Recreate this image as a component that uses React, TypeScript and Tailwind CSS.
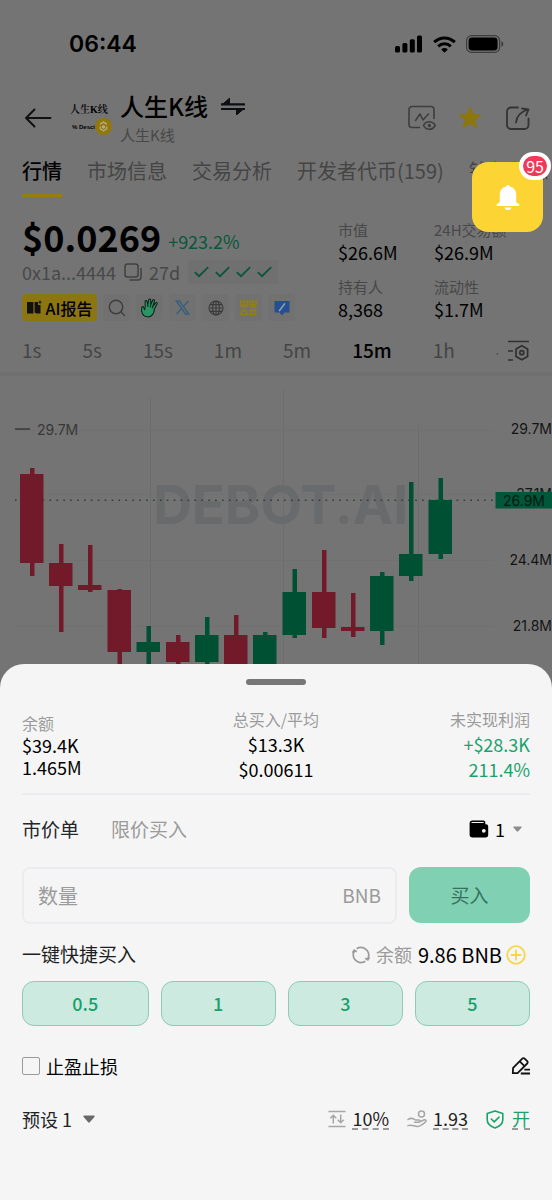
const tabs = ['行情', '市场信息', '交易分析', '开发者代币(159)', '钱包信息']

const frames = ['1s', '5s', '15s', '1m', '5m', '15m', '1h']

const marketStats = [
  { label: '市值', value: '$26.6M' },
  { label: '24H交易额', value: '$26.9M' },
  { label: '持有人', value: '8,368' },
  { label: '流动性', value: '$1.7M' },
]

const quickAmounts = ['0.5', '1', '3', '5']

// wick and body are [top, bottom]
const candles = [
  { x: 32, wick: [468, 576], body: [474, 563], up: false },
  { x: 61, wick: [544, 632], body: [563, 586], up: false },
  { x: 90, wick: [545, 592], body: [585, 590], up: false },
  { x: 119.5, wick: [589, 690], body: [590, 652], up: false },
  { x: 148.5, wick: [626, 690], body: [642, 652], up: true },
  { x: 178, wick: [635, 690], body: [642, 662], up: false },
  { x: 207, wick: [617, 690], body: [635, 662], up: true },
  { x: 236, wick: [615, 690], body: [635, 690], up: false },
  { x: 265, wick: [632, 690], body: [635, 690], up: true },
  { x: 294.5, wick: [569, 638], body: [592, 635], up: true },
  { x: 324, wick: [550, 638], body: [592, 628], up: false },
  { x: 353, wick: [593, 637], body: [627, 631], up: false },
  { x: 382, wick: [572, 645], body: [576, 631], up: true },
  { x: 411, wick: [482, 581], body: [554, 576], up: true },
  { x: 440.5, wick: [478, 559], body: [500, 554], up: true },
]

function StatusBar() {
  return (
    <div className="flex h-[88px] items-center justify-between pl-[69px] pr-12">
      <span className="font-['Inter',sans-serif] text-[23px] font-semibold leading-none">06:44</span>
      <div className="flex items-center gap-2.5">
        <svg width="28" height="18" viewBox="0 0 28 18">
          <rect x="0" y="11" width="5" height="6.5" rx="1.5" />
          <rect x="7.4" y="8" width="5" height="9.5" rx="1.5" />
          <rect x="14.8" y="4.2" width="5" height="13.3" rx="1.5" />
          <rect x="22" y="0.5" width="5" height="17" rx="1.5" />
        </svg>
        <svg width="23" height="17" viewBox="0 0 23 17" fill="none" stroke="#000" strokeWidth="3.1">
          <path d="M1.2 6.2a14.6 14.6 0 0 1 20.6 0" />
          <path d="M5.2 10.3a9 9 0 0 1 12.6 0" />
          <path d="M11.5 16.8l-3.3-3.4a4.7 4.7 0 0 1 6.6 0z" fill="#000" stroke="none" />
        </svg>
        <svg width="38" height="18" viewBox="0 0 38 18">
          <rect x="0.6" y="0.6" width="33" height="16.8" rx="5" fill="none" stroke="#3c3c3c" strokeWidth="1.2" />
          <rect x="2.6" y="2.6" width="29" height="12.8" rx="3.4" />
          <path d="M35.3 6.2v5.6c1.2-.4 2-1.5 2-2.8s-.8-2.4-2-2.8z" fill="#3c3c3c" />
        </svg>
      </div>
    </div>
  )
}

function Header() {
  return (
    <header className="flex h-[60px] items-center px-[22px]">
      <button aria-label="返回" className="mr-[18px]">
        <svg width="30" height="22" viewBox="0 0 30 22" fill="none" stroke="#111" strokeWidth="2" strokeLinecap="round" strokeLinejoin="round">
          <path d="M12.5 2.5L4 11l8.5 8.5M4 11h24.5" />
        </svg>
      </button>
      <div className="flex h-10 w-[42px] flex-col font-['Liberation_Serif','Noto_Serif_CJK_SC','Noto_Sans_CJK_SC',serif] leading-none">
        <span className="whitespace-nowrap pt-1 text-[10px] font-semibold leading-4">人生K线</span>
        <div className="flex items-center justify-between pl-0.5">
          <span className="whitespace-nowrap font-['Liberation_Sans',sans-serif] text-[6px] font-bold">% Desci</span>
          <svg className="shrink-0" width="17" height="17" viewBox="0 0 16 16">
            <circle cx="8" cy="8" r="8" fill="#927709" />
            <path d="M8 3l3.2 1.9v1.7L8 4.8 4.8 6.6V4.9zM8 6.6l1.5.9v1.8L8 10.2l-1.5-.9V7.5zM4.400 7.600v3L8 12.800l3.600-2.200v-3l-1.200.7v1.600L8 11.400 5.600 9.900V8.300z" fill="#b3ab8c" />
          </svg>
        </div>
      </div>
      <div className="ml-2">
        <div className="flex items-center gap-3">
          <h1 className="text-[24px] font-medium leading-[34px]">人生K线</h1>
          <svg width="26" height="18" viewBox="0 0 26 18" fill="none" stroke="#0d0f12" strokeWidth="2.2">
            <path d="M1 7.3h24M1 12h24" />
            <path d="M2.5 7.3L9.5 1.2V7z" fill="#0d0f12" strokeWidth="1" />
            <path d="M23.5 12l-7 6V12z" fill="#0d0f12" strokeWidth="1" />
          </svg>
        </div>
        <p className="text-[15px] leading-6 text-[#484848]">人生K线</p>
      </div>
      <div className="ml-auto flex items-center gap-[22px]">
        <button aria-label="观察图表">
          <svg width="28" height="26" viewBox="0 0 28 26" fill="none" stroke="#3e3e3e" strokeWidth="1.6" strokeLinecap="round" strokeLinejoin="round">
            <path d="M11.5 22.5H4a3 3 0 0 1-3-3V4.5a3 3 0 0 1 3-3h19a3 3 0 0 1 3 3v9" />
            <path d="M7.5 15.5L12 9l3 6 5.5-6" />
            <path d="M15.5 20.5c2.6-5 9-5 11.7 0-2.7 5-9.1 5-11.7 0z" />
            <circle cx="21.4" cy="20.5" r="0.9" fill="#3e3e3e" />
          </svg>
        </button>
        <button aria-label="收藏">
          <svg width="24" height="24" viewBox="0 0 24 24" fill="#8c7610">
            <path d="M12 1.2l3 7 7.8.7-5.9 5.1 1.8 7.6-6.7-4.1-6.7 4.1L7.1 14 1.2 8.9l7.8-.7z" stroke="#8c7610" strokeLinejoin="round" />
          </svg>
        </button>
        <button aria-label="分享" className="ml-0.5">
          <svg width="24" height="24" viewBox="0 0 24 24" fill="none" stroke="#333" strokeWidth="1.8" strokeLinecap="round" strokeLinejoin="round">
            <path d="M12 1.5H5a4 4 0 0 0-4 4V19a4 4 0 0 0 4 4h13.5a4 4 0 0 0 4-4v-6.5" />
            <path d="M10 16.5C10.5 10.5 14 6 22 3.5M16 2.5l6.5 1-2.5 6" />
          </svg>
        </button>
      </div>
    </header>
  )
}

function SocialLinks() {
  return (
    <div className="mt-2.5 flex h-[27px] items-stretch gap-1.5">
      <button className="flex w-[75px] items-center justify-center gap-1 rounded bg-[#8c7612] text-[16px] font-medium whitespace-nowrap">
        <svg width="15" height="15" viewBox="0 0 15 15" fill="#111">
          <path d="M0 2h6.4v11.5H0zM7.600 2H11v3h2.500v8.500H9.500l-1.900-1z" />
          <path d="M13 0l.6 1.600 1.400.6-1.400.6L13 4.400l-.6-1.600L11 2.200l1.400-.6z" />
        </svg>
        AI报告
      </button>
      <a href="#search" aria-label="搜索" className="flex w-[27px] items-center justify-center rounded bg-[#717171]">
        <svg width="18" height="18" viewBox="0 0 18 18" fill="none" stroke="#3c3c3c" strokeWidth="1.4" strokeLinecap="round">
          <circle cx="8" cy="8" r="6.7" />
          <path d="M13 13l3.500 3.500" />
        </svg>
      </a>
      <a href="#hand" aria-label="社区" className="flex w-[27px] items-center justify-center rounded bg-[#717171]">
        <svg className="rotate-12" width="18" height="20" viewBox="0 0 18 20" fill="#2a9466" stroke="#0a1f14" strokeWidth="1" strokeLinejoin="round">
          <path d="M4 9.500L2.800 4.600c-.2-1.200 1.400-1.700 1.900-.5L6.200 7.500 6 2.300c0-1.400 1.800-1.500 2.100-.2l.9 4.700 1-5c.4-1.200 2-.9 1.900.4l-.4 5.300 1.900-3.700c.7-1 2.100-.4 1.700.8l-1.700 5.700c.9 3-.4 8.400-5.100 8.900-3.600.4-5.800-1.600-6.900-4.500L.8 11.200c-.1-1.100 1.100-1.500 1.700-.6l1.700 2.200z" />
          <path d="M6.200 7.500l.6 2M9 6.800l.1 2.400M11.500 7.500l-.5 2.300" fill="none" />
        </svg>
      </a>
      <a href="#x" aria-label="X" className="flex w-[27px] items-center justify-center rounded bg-[#717171]">
        <svg width="15" height="15" viewBox="0 0 15 15" fill="none" stroke="#35607d" strokeWidth="1.4">
          <path d="M1.200 1h3.200l9.400 13h-3.200z" />
          <path d="M13.300 1L8.400 6.600M6.500 8.700L1.600 14" />
        </svg>
      </a>
      <a href="#site" aria-label="官网" className="flex w-[27px] items-center justify-center rounded bg-[#717171]">
        <svg width="16" height="16" viewBox="0 0 16 16" fill="none" stroke="#3a3a3a" strokeWidth="1.1">
          <circle cx="8" cy="8" r="7" />
          <ellipse cx="8" cy="8" rx="3.5" ry="7" />
          <path d="M8 1v14M1 8h14M2 4.600h12M2 11.400h12" />
        </svg>
      </a>
      <a href="#binance" aria-label="币安广场" className="flex w-[27px] items-center justify-center rounded bg-[#717171]">
        <svg width="17" height="16" viewBox="0 0 17 16" fill="none" stroke="#94800f" strokeWidth="1.6">
          <path d="M.8 1.200h6.400v4H.8zM4 1.200v6.600M.5 7h7M9.500 1.200h6.700v3.500H9.500zM12.800 0v7.800M10 6.800h6" />
          <path d="M2 10l-1 4.500h6L6 10M4 9v3M9.500 10h7M9.500 14.800h7M11 9v6M14.800 9v6" />
        </svg>
      </a>
      <a href="#note" aria-label="笔记" className="flex w-[27px] items-center justify-center rounded bg-[#717171]">
        <svg width="16" height="16" viewBox="0 0 16 16">
          <path d="M.5 1h15v11.500h-5L8 15.500l-2.500-3h-5z" fill="#245092" />
          <path d="M5.500 10.500l5-6.500" stroke="#8d9aae" strokeWidth="1.7" strokeLinecap="round" />
        </svg>
      </a>
    </div>
  )
}

function TokenInfo() {
  return (
    <section className="flex items-end justify-between px-[22px] pt-[19px]">
      <div>
        <div className="flex h-10 items-center gap-[7px]">
          <span className="text-[36px] font-bold leading-10">$0.0269</span>
          <span className="pt-2.5 text-[18px] leading-6 text-[#09573c]">+923.2%</span>
        </div>
        <div className="mt-1 flex h-6 items-center text-[18px] text-[#484848]">
          <span>0x1a...4444</span>
          <button aria-label="复制" className="ml-2">
            <svg width="18" height="18" viewBox="0 0 18 18" fill="none" stroke="#404040" strokeWidth="1.5" strokeLinecap="round">
              <rect x="1" y="1" width="13" height="13" rx="2.5" />
              <path d="M17 5.500V14a3 3 0 0 1-3 3H6" />
            </svg>
          </button>
          <span className="ml-[7px]">27d</span>
          <div className="ml-2 flex items-center gap-1.5 rounded bg-[#707070] px-1.5 py-1.5">
            {[0, 1, 2, 3].map((i) => (
              <svg key={i} width="15" height="12" viewBox="0 0 15 12" fill="none" stroke="#07553a" strokeWidth="1.7">
                <path d="M.8 6.200l4.200 4L14.200 1.200" />
              </svg>
            ))}
          </div>
        </div>
        <SocialLinks />
      </div>
      <dl className="grid grid-cols-[96px_96px] gap-y-[13px]">
        {marketStats.map((s) => (
          <div key={s.label}>
            <dt className="text-[15px] leading-5 text-[#484848]">{s.label}</dt>
            <dd className="text-[18px] leading-6">{s.value}</dd>
          </div>
        ))}
      </dl>
    </section>
  )
}

function FrameBar() {
  return (
    <div className="flex items-center justify-between border-b-4 border-[#6f6f6f] px-[22px] pt-2">
      <div className="flex h-[43px] items-center gap-[41px]">
        {frames.map((f) => (
          <button key={f} className={f === '15m' ? 'text-[19px] font-medium' : 'text-[19px] text-[#454545]'}>
            {f}
          </button>
        ))}
      </div>
      <button aria-label="图表设置">
        <svg width="34" height="24" viewBox="0 0 34 24" fill="none" stroke="#303030" strokeWidth="1.7" strokeLinejoin="round">
          <path d="M12 2.500h21M12 12h5M12 21h5" />
          <path d="M20 10l5.800-3.300L31.600 10v7.500l-5.800 3.300L20 17.500z" />
          <circle cx="25.8" cy="13.7" r="2" />
          <circle cx="1.2" cy="15" r="0.7" fill="#303030" stroke="none" />
        </svg>
      </button>
    </div>
  )
}

function Chart() {
  return (
    <svg className="block w-full" viewBox="0 376 552 310" fontFamily="Inter, sans-serif">
      <g stroke="#6d6d6d" strokeWidth="1">
        <path d="M150.500 396v290M283.500 390v296M418.500 424v262" />
        <path d="M15 430.500h480M15 494.500h480M15 560.500h480M15 626.500h480" stroke="#717171" />
      </g>
      <text x="153" y="524" fontSize="54" fontWeight="700" fill="#696a6c">DEBOT.AI</text>
      <path d="M15 429h15" stroke="#383838" strokeWidth="1.5" />
      <text x="37" y="435" fontSize="14" fill="#383838">29.7M</text>
      <path d="M15 500.300h480" stroke="#343c39" strokeWidth="1.6" strokeDasharray="1.6 5.3" />
      {candles.map((c) => (
        <g key={c.x} fill={c.up ? '#005034' : '#721a29'}>
          <rect x={c.x - 2} y={c.wick[0]} width="4.5" height={c.wick[1] - c.wick[0]} />
          <rect x={c.x - 12} y={c.body[0]} width="23.5" height={c.body[1] - c.body[0]} />
        </g>
      ))}
      <g fontSize="14" fill="#141414" textAnchor="end">
        <text x="552" y="434">29.7M</text>
        <text x="552" y="499">27.1M</text>
        <text x="552" y="565">24.4M</text>
        <text x="552" y="631">21.8M</text>
      </g>
      <rect x="495.5" y="492" width="57" height="16.5" fill="#00573a" />
      <text x="503" y="506" fontSize="14" fill="#001a10">26.9M</text>
    </svg>
  )
}

function Caret({ className }: { className: string }) {
  return (
    <svg className={className} width="12" height="8" viewBox="0 0 12 8" fill="currentColor">
      <path d="M1.200.5h9.600c.8 0 1.100.9.600 1.400L7 7.100a1.300 1.300 0 0 1-2 0L.6 1.900C.1 1.400.4.5 1.200.5z" />
    </svg>
  )
}

function Position() {
  return (
    <div className="mt-[22px] flex items-center justify-between border-b-2 border-[#ebebf0] pb-[11px] text-[18px]">
      <div className="flex-1 leading-[22px]">
        <p className="text-[16px] text-[#9b9b9b]">余额</p>
        <p>$39.4K</p>
        <p>1.465M</p>
      </div>
      <div className="flex-1 text-center leading-[25px]">
        <p className="text-[16px] text-[#9b9b9b]">总买入/平均</p>
        <p>$13.3K</p>
        <p>$0.00611</p>
      </div>
      <div className="flex-1 text-right leading-[25px] text-[#1aa26d]">
        <p className="text-[16px] text-[#9b9b9b]">未实现利润</p>
        <p>+$28.3K</p>
        <p>211.4%</p>
      </div>
    </div>
  )
}

function OrderForm() {
  return (
    <form onSubmit={(e) => e.preventDefault()}>
      <div className="flex h-[68px] items-center text-[19px]">
        <button type="button" className="text-[#24262b]">市价单</button>
        <button type="button" className="ml-8 text-[#9b9b9b]">限价买入</button>
        <label className="ml-auto flex items-center pr-2">
          <svg width="20" height="18" viewBox="0 0 20 18">
            <path d="M3 .5h11.500A1.800 1.800 0 0 1 16.300 2v2.200h.7a2.200 2.200 0 0 1 2.200 2.200v8.400a2.700 2.700 0 0 1-2.700 2.700H3.500A2.900 2.900 0 0 1 .6 14.600V3A2.500 2.500 0 0 1 3 .5z" />
            <path d="M3 2.500h11.200" stroke="#f5f5f5" strokeWidth="1.2" strokeLinecap="round" />
            <circle cx="14.8" cy="10.8" r="1.9" fill="#f5f5f5" />
          </svg>
          <select aria-label="钱包" className="ml-1.5 appearance-none bg-transparent text-[18px]">
            <option>1</option>
          </select>
          <Caret className="ml-2 h-[6px] w-[9px] text-[#8b8b8b]" />
        </label>
      </div>
      <div className="mt-1 flex gap-3">
        <label className="flex h-[57px] min-w-0 flex-1 items-center rounded-lg border-2 border-[#ececf0] px-3.5">
          <input type="text" aria-label="数量" placeholder="数量" className="min-w-0 flex-1 bg-transparent text-[20px] outline-none placeholder:text-[#9b9b9b]" />
          <span className="text-[19px] text-[#9b9b9b]">BNB</span>
        </label>
        <button type="submit" className="h-14 w-[121px] rounded-xl bg-[#80d1b4] text-[19px] text-[#38705c]">买入</button>
      </div>
    </form>
  )
}

function QuickBuy() {
  return (
    <section>
      <div className="flex h-[57px] items-center pt-1">
        <h2 className="text-[19px] text-[#1d1f24]">一键快捷买入</h2>
        <button aria-label="刷新余额" className="ml-auto">
          <svg width="18" height="18" viewBox="0 0 18 18" fill="none" stroke="#9b9b9b" strokeWidth="1.7">
            <path d="M4.600 2.700A8 8 0 0 1 16.800 9.500c-.2 1.500-.7 2.600-1.400 3.700M13.400 15.300A8 8 0 0 1 1.200 8.500c.2-1.500.7-2.600 1.400-3.700" />
            <path d="M17.500 11.200l-1.700 2.600-2.600-1.500M.5 6.800l1.700-2.600 2.600 1.500" />
          </svg>
        </button>
        <span className="ml-1.5 text-[18px] text-[#9b9b9b]">余额</span>
        <span className="ml-1.5 text-[20px]">9.86 BNB</span>
        <button aria-label="充值" className="ml-1 mr-1">
          <svg width="20" height="20" viewBox="0 0 20 20" fill="none" stroke="#f6d646" strokeWidth="1.8" strokeLinecap="round">
            <circle cx="10" cy="10" r="8.8" />
            <path d="M10 5.500v9M5.500 10h9" />
          </svg>
        </button>
      </div>
      <div className="grid grid-cols-[1.1fr_1fr_1fr_1fr] gap-3">
        {quickAmounts.map((a) => (
          <button key={a} className="h-[45px] rounded-xl border border-[#8fcab4] bg-[#cdeae0] text-[18px] font-medium text-[#15a26b]">
            {a}
          </button>
        ))}
      </div>
    </section>
  )
}

function Presets() {
  return (
    <section className="text-[18px]">
      <div className="flex h-20 items-center justify-between">
        <label className="flex items-center gap-1.5">
          <input type="checkbox" className="size-[18px] appearance-none rounded-xs border border-[#9a9a9a]" />
          止盈止损
        </label>
        <button aria-label="编辑">
          <svg width="19" height="18" viewBox="0 0 19 18" fill="none" stroke="#111" strokeWidth="1.8" strokeLinejoin="round">
            <path d="M1.800 16.200l.3-5.400L11.300 1.600a1.600 1.600 0 0 1 2.300 0l2.600 2.600a1.600 1.600 0 0 1 0 2.300L6.600 16.100z" />
            <path d="M8.700 4.300l4.800 4.800M13.300 12.600H19M9.800 16.500H19" />
          </svg>
        </button>
      </div>
      <div className="flex h-[26px] items-center text-[#222]">
        <label className="flex items-center gap-2.5">
          <select aria-label="预设" className="appearance-none bg-transparent">
            <option>预设 1</option>
          </select>
          <Caret className="text-[#6a6a6a]" />
        </label>
        <svg className="ml-auto mr-1.5" width="18" height="18" viewBox="0 0 18 18" fill="none" stroke="#a6a6a6" strokeWidth="1.5">
          <path d="M.5 1.500h17M.5 16.500h17M5.300 13.500v-8M2.300 8.300l3-3 3 3M12.700 4.500v8M9.700 9.700l3 3 3-3" />
        </svg>
        <button className="border-b-2 border-dashed border-[#9a9a9a] leading-5">10%</button>
        <svg className="ml-[18px] mr-1.5" width="20" height="18" viewBox="0 0 20 18" fill="none" stroke="#a6a6a6" strokeWidth="1.5" strokeLinecap="round" strokeLinejoin="round">
          <circle cx="14.5" cy="4" r="3" />
          <path d="M1 9.500c3-2 5-1.500 7.500.5h3.200c1.600 0 1.600 2.200 0 2.300H7.500M12.800 11.800l4.600-2c1.400-.4 2.200 1 1.200 2-2 2-4.600 4.200-7.600 4.700-3.500.4-6-2.500-10-.9" />
        </svg>
        <button className="border-b-2 border-dashed border-[#9a9a9a] leading-5">1.93</button>
        <svg className="ml-[18px] mr-2" width="18" height="19" viewBox="0 0 18 19" fill="none" stroke="#1aa26d" strokeWidth="1.6" strokeLinecap="round" strokeLinejoin="round">
          <path d="M9 1l7.800 2.500v6.200c0 3.600-3.300 6.700-7.800 8.300-4.500-1.600-7.800-4.700-7.800-8.300V3.500z" />
          <path d="M5.300 9l2.900 2.800 4.900-4.600" />
        </svg>
        <button className="border-b-2 border-dashed border-[#9a9a9a] leading-5 text-[#1aa26d]">开</button>
      </div>
    </section>
  )
}

export default function App() {
  return (
    <div className="relative flex min-h-screen flex-col overflow-hidden bg-[#747474] font-['Noto_Sans_CJK_SC',sans-serif] text-black">
      <StatusBar />
      <Header />
      <nav className="flex gap-[25px] overflow-hidden px-[22px] text-[20px]">
        {tabs.map((t, i) => (
          <button
            key={t}
            className={
              i === 0
                ? 'h-[49px] shrink-0 border-b-3 border-[#94800f] font-medium'
                : 'h-[49px] shrink-0 border-b-3 border-transparent text-[#454545]'
            }
          >
            {t}
          </button>
        ))}
      </nav>
      <TokenInfo />
      <FrameBar />
      <Chart />

      <main className="relative -mt-[22px] flex-1 rounded-t-3xl bg-[#f5f5f5] px-[22px] pt-[15px] pb-8">
        <div className="mx-auto h-1.5 w-[60px] rounded-full bg-[#777]" />
        <Position />
        <OrderForm />
        <QuickBuy />
        <Presets />
      </main>

      <button aria-label="通知" className="absolute top-[162px] right-[9px] flex h-[70px] w-[71px] items-center justify-center rounded-2xl bg-[#fcd535]">
        <svg width="26" height="27" viewBox="0 0 26 27" fill="#fff">
          <path d="M13 1c1 0 1.600.6 1.700 1.500 4.200.9 6.500 4 6.500 8.300v6.700c0 1 .8 1.800 2.300 2.300.6.3 1 .7 1 1.300 0 .5-.4.9-1 .9h-21c-.6 0-1-.4-1-.9 0-.6.4-1 1-1.300 1.500-.5 2.300-1.300 2.300-2.300v-6.700c0-4.300 2.300-7.400 6.500-8.300C11.400 1.600 12 1 13 1z" />
          <path d="M9.500 23.500h7c-.5 1.700-1.800 2.600-3.500 2.600s-3-.9-3.500-2.600z" />
        </svg>
        <span className="absolute -top-2.5 -right-2 flex h-[28px] items-center justify-center rounded-full border-4 border-white bg-[#ee3a57] px-[3px] text-[16px] leading-none text-white">
          95
        </span>
      </button>
    </div>
  )
}
